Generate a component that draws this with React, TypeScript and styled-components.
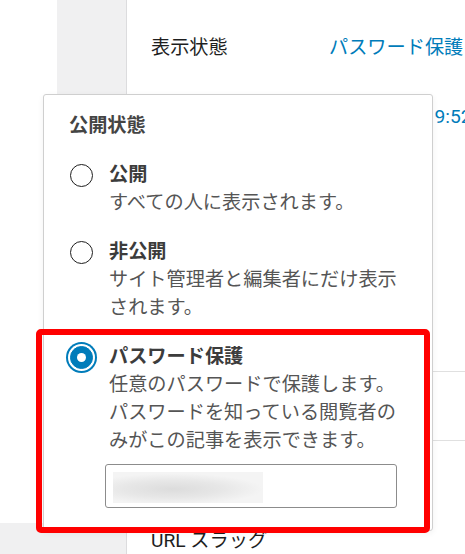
import React from 'react'
import styled, { createGlobalStyle } from 'styled-components'

const GlobalStyle = createGlobalStyle`
  html, body {
    margin: 0;
    padding: 0;
    background: #fff;
  }
  body {
    font-family: Roboto, "Noto Sans CJK JP", sans-serif;
    color: #1e1e1e;
  }
`

type Option = {
  id: string
  label: string
  help: string
  checked?: boolean
  withPassword?: boolean
}

const options: Option[] = [
  { id: 'public', label: '公開', help: 'すべての人に表示されます。' },
  { id: 'private', label: '非公開', help: 'サイト管理者と編集者にだけ表示されます。' },
  {
    id: 'password',
    label: 'パスワード保護',
    help: '任意のパスワードで保護します。パスワードを知っている閲覧者のみがこの記事を表示できます。',
    checked: true,
    withPassword: true,
  },
]

// rows of the document panel, most of them sit behind the popover
const summaryRows = [
  { label: '表示状態', value: 'パスワード保護' },
  { label: '公開', value: '23年4月1日 9:52' },
  { label: 'テンプレート', value: 'デフォルト' },
  { label: 'フォーマット', value: '標準' },
  { label: '投稿者', value: 'admin' },
]

export default function App(): JSX.Element {
  return (
    <Screen lang="ja">
      <GlobalStyle />
      <EditorSide>
        <CanvasTop>
          <CanvasBlank />
          <CanvasStrip />
        </CanvasTop>
        <CanvasFoot />
      </EditorSide>

      <Sidebar>
        <PanelSection $padTop={14} $padBottom={13}>
          {summaryRows.map((row) => (
            <SettingRow key={row.label}>
              <RowLabel>{row.label}</RowLabel>
              <RowValue>{row.value}</RowValue>
            </SettingRow>
          ))}
        </PanelSection>
        <PanelSection $padTop={0} $padBottom={0}>
          <SettingRow>
            <RowLabel>レビュー待ち</RowLabel>
          </SettingRow>
        </PanelSection>
        <PanelSection $padTop={14} $padBottom={0} $last>
          <SettingRow>
            <RowLabel>先頭に固定表示</RowLabel>
          </SettingRow>
          <SlugRow>URL スラッグ</SlugRow>
        </PanelSection>
      </Sidebar>

      <Popover role="dialog">
        <PopoverTitle>公開状態</PopoverTitle>
        <OptionList>
          {options.map((opt) => (
            <OptionItem key={opt.id}>
              <RadioCell>
                <Radio $checked={!!opt.checked} />
              </RadioCell>
              <OptionText>
                <OptionLabel>{opt.label}</OptionLabel>
                <OptionHelp>{opt.help}</OptionHelp>
                {opt.withPassword && (
                  <PasswordField>
                    <Redacted />
                  </PasswordField>
                )}
              </OptionText>
            </OptionItem>
          ))}
        </OptionList>
      </Popover>

      <Highlight />
    </Screen>
  )
}

const Screen = styled.div`
  position: relative;
  display: flex;
  width: 465px;
  height: 554px;
  overflow: hidden;
`

const EditorSide = styled.div`
  display: flex;
  flex-direction: column;
  width: 126px;
  flex-shrink: 0;
  border-right: 1px solid #dcdcde;
`

const CanvasTop = styled.div`
  flex: 1;
  display: grid;
  grid-template-columns: 57px 1fr;
`

const CanvasBlank = styled.div`
  background: #fff;
`

const CanvasStrip = styled.div`
  background: #f0f0f1;
`

const CanvasFoot = styled.div`
  height: 31px;
  background: #f0f0f1;
`

const Sidebar = styled.div`
  flex: 1;
  background: #fff;
  overflow: hidden;
  white-space: nowrap;
`

const PanelSection = styled.div<{ $padTop: number; $padBottom: number; $last?: boolean }>`
  padding-top: ${(p) => p.$padTop}px;
  padding-bottom: ${(p) => p.$padBottom}px;
  border-bottom: ${(p) => (p.$last ? 'none' : '1px solid #e0e0e0')};
`

const SettingRow = styled.div`
  display: grid;
  grid-template-columns: 178px 1fr;
  align-items: center;
  height: 68px;
  padding-left: 24px;
  font-size: 19.2px;
  line-height: 28px;

  & + & {
    height: 69px;
  }
`

const RowLabel = styled.span`
  color: #1e1e1e;
`

const RowValue = styled.span`
  color: #007cba;
`

const SlugRow = styled.div`
  padding: 4px 0 0 24px;
  font-size: 19.2px;
  line-height: 28px;
  color: #1e1e1e;
`

const Popover = styled.div`
  position: absolute;
  left: 43px;
  top: 94px;
  width: 390px;
  box-sizing: border-box;
  padding: 18px 26px 22px 25px;
  background: #fff;
  border: 1px solid #cfcfcf;
  border-radius: 3px;
  box-shadow: 0 2px 6px rgba(0, 0, 0, 0.06);
`

const PopoverTitle = styled.h2`
  margin: 0;
  font-size: 19.2px;
  line-height: 26px;
  font-weight: 700;
  color: #444;
`

const OptionList = styled.div`
  display: flex;
  flex-direction: column;
  gap: 22px;
  margin-top: 23px;
`

const OptionItem = styled.div`
  display: grid;
  grid-template-columns: 24px 1fr;
  column-gap: 16px;
`

const RadioCell = styled.div`
  display: flex;
  align-items: center;
  justify-content: center;
  height: 26px;
`

const Radio = styled.span<{ $checked: boolean }>`
  position: relative;
  width: 23px;
  height: 23px;
  box-sizing: border-box;
  border-radius: 50%;
  border: 1.5px solid ${(p) => (p.$checked ? '#007cba' : '#1e1e1e')};
  background: ${(p) => (p.$checked ? '#007cba' : '#fff')};
  box-shadow: ${(p) => (p.$checked ? '0 0 0 2px #fff, 0 0 0 4px #007cba' : 'none')};

  &::after {
    content: '';
    display: ${(p) => (p.$checked ? 'block' : 'none')};
    position: absolute;
    left: 50%;
    top: 50%;
    width: 9px;
    height: 9px;
    margin: -4.5px 0 0 -4.5px;
    border-radius: 50%;
    background: #fff;
  }
`

const OptionText = styled.div`
  display: flex;
  flex-direction: column;
  min-width: 0;
`

const OptionLabel = styled.span`
  font-size: 19.2px;
  line-height: 26px;
  font-weight: 700;
  color: #3c3c3c;
`

const OptionHelp = styled.p`
  margin: 1px 0 0;
  font-size: 19.2px;
  line-height: 28px;
  color: #555;
`

const PasswordField = styled.div`
  margin: 9px 0 0 -4px;
  width: 292px;
  height: 44px;
  box-sizing: border-box;
  padding: 7px;
  border: 1px solid #8c8c8c;
  border-radius: 3px;
  background: #fff;
`

const Redacted = styled.div`
  width: 150px;
  height: 31px;
  background: radial-gradient(ellipse 60% 50% at 40% 55%, #dcdcdc 0%, #e7e7e7 55%, #f4f4f4 100%);
`

const Highlight = styled.div`
  position: absolute;
  left: 36px;
  top: 329px;
  width: 394px;
  height: 204px;
  box-sizing: border-box;
  border: 6px solid #ff0000;
  border-radius: 5px;
  pointer-events: none;
`
